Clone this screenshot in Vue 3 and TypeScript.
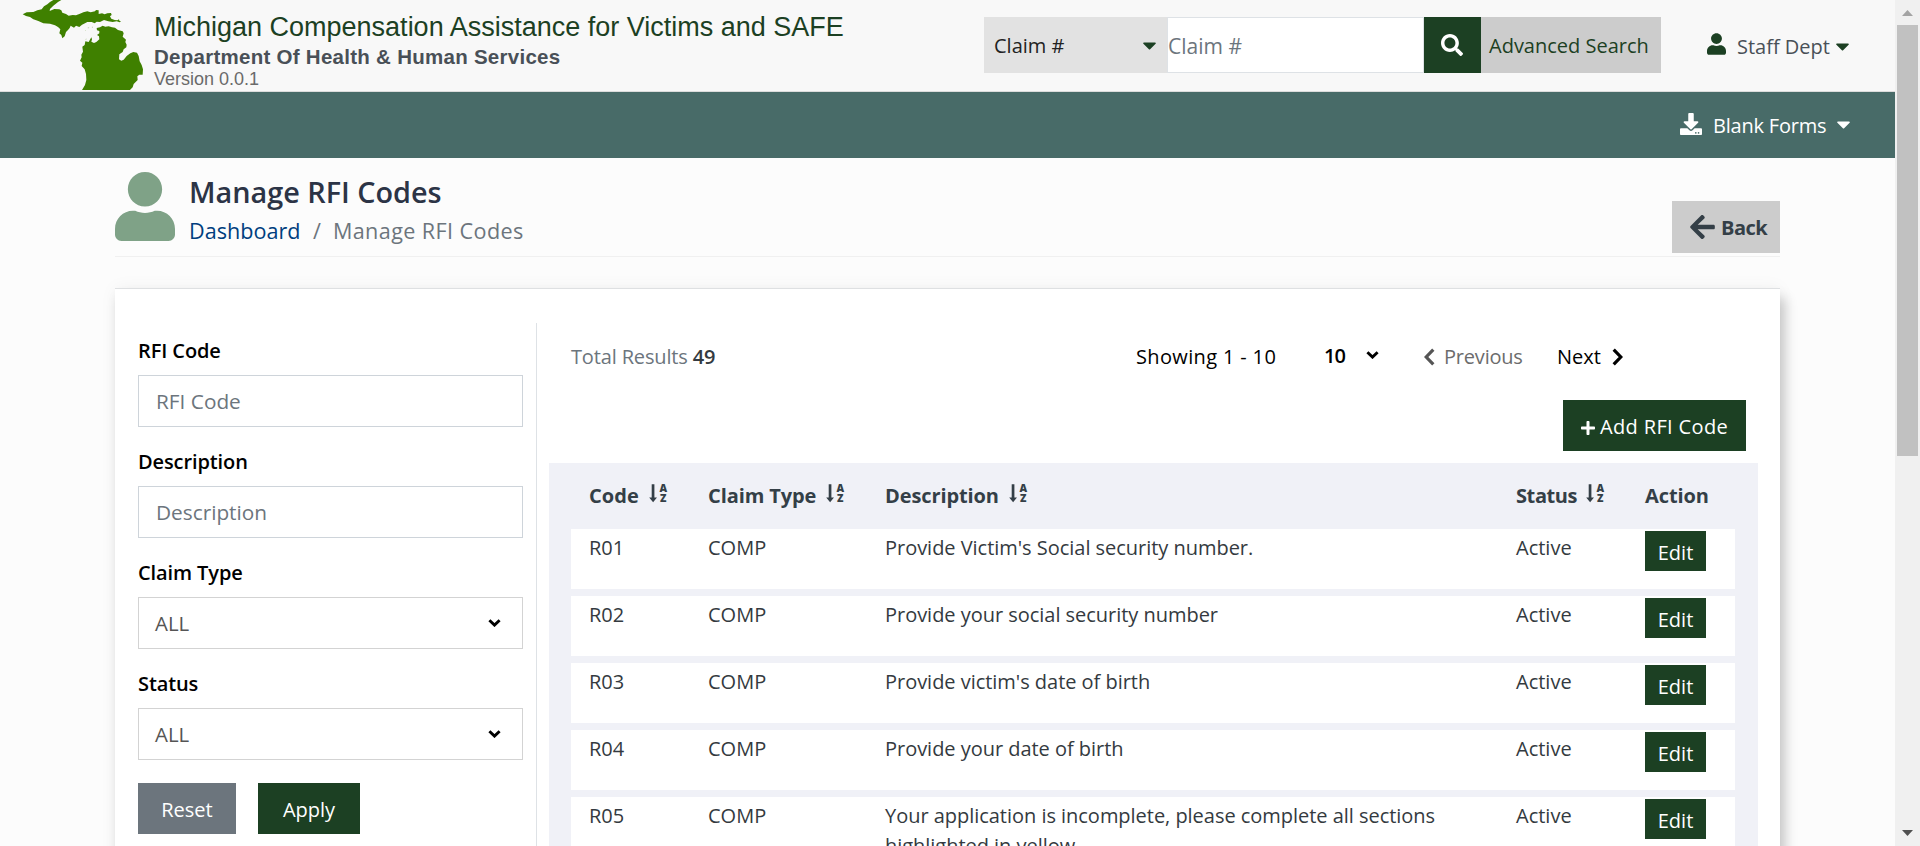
<script setup lang="ts">
interface RfiCode {
  code: string
  claimType: string
  description: string
  status: string
}

const rows: RfiCode[] = [
  { code: 'R01', claimType: 'COMP', description: "Provide Victim's Social security number.", status: 'Active' },
  { code: 'R02', claimType: 'COMP', description: 'Provide your social security number', status: 'Active' },
  { code: 'R03', claimType: 'COMP', description: "Provide victim's date of birth", status: 'Active' },
  { code: 'R04', claimType: 'COMP', description: 'Provide your date of birth', status: 'Active' },
  {
    code: 'R05',
    claimType: 'COMP',
    description: 'Your application is incomplete, please complete all sections highlighted in yellow.',
    status: 'Active',
  },
]

const columns: { label: string; sortable: boolean }[] = [
  { label: 'Code', sortable: true },
  { label: 'Claim Type', sortable: true },
  { label: 'Description', sortable: true },
  { label: 'Status', sortable: true },
  { label: 'Action', sortable: false },
]

const caret =
  'M31.3 192h257.3c17.8 0 26.7 21.5 14.1 34.1L174.1 354.8c-7.8 7.8-20.5 7.8-28.3 0L17.2 226.1C4.6 213.5 13.5 192 31.3 192z'
const userPath =
  'M224 256c70.7 0 128-57.3 128-128S294.7 0 224 0 96 57.3 96 128s57.3 128 128 128zm89.6 32h-16.7c-22.2 10.2-46.9 16-72.9 16s-50.6-5.8-72.9-16h-16.7C60.2 288 0 348.2 0 422.4V464c0 26.5 21.5 48 48 48h352c26.5 0 48-21.5 48-48v-41.6c0-74.2-60.2-134.4-134.4-134.4z'
</script>

<template>
  <div class="window">
    <div class="page">
      <header class="top">
        <svg class="logo" viewBox="66 0 363 270" aria-hidden="true">
          <path d="M68 43L80 37 100 36 112 31 125 28 132 19 142 13 150 6 160 0H184L174 6 160 17 150 27 149 33 156 30 163 27 178 28 184 31 187 38 198 42 206 47 218 45 228 46 238 42 250 37 262 34 272 37 285 34 288 30 296 31 296 42 306 40 314 43 322 40 333 39 335 45 330 49 334 56 344 60 352 61 357 58 358 62 363 64 359 67 350 64 338 66 325 64 312 60 300 66 290 65 284 70 275 66 262 66 255 70 246 74 238 81 228 77 222 83 212 77 209 84 204 90 198 96 194 109 187 115 184 105 178 100 181 88 174 81 165 76 150 71 130 70 115 63 100 58 90 51 78 48Z" />
          <path d="M290 84L300 82 308 77 316 80 326 79 336 82 345 83 354 90 368 94 371 100 368 110 378 119 376 126 380 134 379 142 371 148 368 156 358 163 357 178 364 182 371 179 380 168 391 160 400 156 411 158 416 168 419 184 425 195 429 208 428 224 418 224 412 229 413 240 401 252 398 262 390 270H246L255 255 259 240 258 222 254 208 245 198 247 188 240 182 245 172 244 164 249 155 247 140 254 135 256 124 266 126 274 112 276 118 274 125 282 129 289 126 298 118 297 109 291 105 298 100 298 93 291 91Z" />
          <path class="isles" d="M262 84l6-2-2 3zM275 81l4-1-1 3zM255 91l3-1-1 2zM256 117l4-1-2 3z" />
        </svg>
        <div class="brand">
          <div class="brand-title">Michigan Compensation Assistance for Victims and SAFE</div>
          <div class="brand-dept">Department Of Health &amp; Human Services</div>
          <div class="brand-version">Version 0.0.1</div>
        </div>
        <div class="search">
          <div class="search-type">
            <span>Claim #</span>
            <svg class="caret" viewBox="8 192 304 169"><path :d="caret" /></svg>
          </div>
          <input class="search-input" type="text" placeholder="Claim #" />
          <button class="search-btn" aria-label="Search">
            <svg viewBox="0 0 512 512"><path d="M505 442.7L405.3 343c-4.5-4.5-10.6-7-17-7H372c27.6-35.3 44-79.7 44-128C416 93.1 322.9 0 208 0S0 93.1 0 208s93.1 208 208 208c48.3 0 92.7-16.4 128-44v16.3c0 6.4 2.5 12.5 7 17l99.7 99.7c9.4 9.4 24.6 9.4 33.9 0l28.3-28.3c9.4-9.4 9.4-24.6.1-34zM208 336c-70.7 0-128-57.2-128-128 0-70.7 57.2-128 128-128 70.7 0 128 57.2 128 128 0 70.7-57.2 128-128 128z" /></svg>
          </button>
          <a class="advanced">Advanced Search</a>
        </div>
        <div class="account">
          <svg class="account-icon" viewBox="0 0 448 512"><path :d="userPath" /></svg>
          <span class="account-name">Staff Dept</span>
          <svg class="caret" viewBox="8 192 304 169"><path :d="caret" /></svg>
        </div>
      </header>

      <nav class="nav">
        <svg class="nav-icon" viewBox="0 0 512 512"><path d="M216 0h80c13.3 0 24 10.7 24 24v168h87.7c17.8 0 26.7 21.5 14.1 34.1L269.7 378.3c-7.5 7.5-19.8 7.5-27.3 0L90.1 226.1c-12.6-12.6-3.7-34.1 14.1-34.1H192V24c0-13.3 10.7-24 24-24zm296 376v112c0 13.3-10.7 24-24 24H24c-13.3 0-24-10.7-24-24V376c0-13.3 10.7-24 24-24h146.7l49 49c20.1 20.1 52.5 20.1 72.6 0l49-49H488c13.3 0 24 10.7 24 24zm-124 88c0-11-9-20-20-20s-20 9-20 20 9 20 20 20 20-9 20-20zm64 0c0-11-9-20-20-20s-20 9-20 20 9 20 20 20 20-9 20-20z" /></svg>
        <span class="nav-label">Blank Forms</span>
        <svg class="caret" viewBox="8 192 304 169"><path :d="caret" /></svg>
      </nav>

      <main class="content">
        <section class="heading">
          <svg class="heading-icon" viewBox="0 0 448 512" preserveAspectRatio="none"><path :d="userPath" /></svg>
          <div class="heading-text">
            <h1>Manage RFI Codes</h1>
            <div class="crumbs">
              <a>Dashboard</a><span class="slash">/</span><span class="current">Manage RFI Codes</span>
            </div>
          </div>
          <button class="back">
            <svg viewBox="0 38 448 436"><path d="M257.5 445.1l-22.2 22.2c-9.4 9.4-24.6 9.4-33.9 0L7 273c-9.4-9.4-9.4-24.6 0-33.9L201.4 44.7c9.4-9.4 24.6-9.4 33.9 0l22.2 22.2c9.5 9.5 9.3 25-.4 34.3L136.6 216H424c13.3 0 24 10.7 24 24v32c0 13.3-10.7 24-24 24H136.6l120.5 114.8c9.8 9.3 10 24.8.4 34.3z" /></svg>
            <span>Back</span>
          </button>
        </section>

        <section class="card">
          <aside class="filters">
            <label>RFI Code</label>
            <input class="field" type="text" placeholder="RFI Code" />
            <label>Description</label>
            <input class="field" type="text" placeholder="Description" />
            <label>Claim Type</label>
            <div class="field select">
              <span>ALL</span>
              <svg class="chev" viewBox="0 0 13 8"><path d="M1.4 1.2L6.5 6.1 11.6 1.2" /></svg>
            </div>
            <label>Status</label>
            <div class="field select">
              <span>ALL</span>
              <svg class="chev" viewBox="0 0 13 8"><path d="M1.4 1.2L6.5 6.1 11.6 1.2" /></svg>
            </div>
            <div class="filter-actions">
              <button class="btn reset">Reset</button>
              <button class="btn apply">Apply</button>
            </div>
          </aside>

          <div class="results">
            <div class="pager">
              <div class="total">Total Results <b>49</b></div>
              <div class="showing">Showing 1 - 10</div>
              <div class="size">
                <span>10</span>
                <svg class="chev" viewBox="0 0 13 8"><path d="M1.4 1.2L6.5 6.1 11.6 1.2" /></svg>
              </div>
              <div class="prev">
                <svg class="arrow" viewBox="0 0 11 18"><path d="M9.3 1.6L2.2 9l7.1 7.4" /></svg>
                <span>Previous</span>
              </div>
              <div class="next">
                <span>Next</span>
                <svg class="arrow" viewBox="0 0 11 18"><path d="M1.7 1.6L8.8 9l-7.1 7.4" /></svg>
              </div>
            </div>
            <div class="toolbar">
              <button class="btn add">
                <svg viewBox="0 32 448 448"><path d="M416 208H272V64c0-17.67-14.33-32-32-32h-32c-17.67 0-32 14.33-32 32v144H32c-17.67 0-32 14.33-32 32v32c0 17.67 14.33 32 32 32h144v144c0 17.67 14.33 32 32 32h32c17.67 0 32-14.33 32-32V304h144c17.67 0 32-14.33 32-32v-32c0-17.67-14.33-32-32-32z" /></svg>
                <span>Add RFI Code</span>
              </button>
            </div>
            <div class="table">
              <div class="row head">
                <div v-for="col in columns" :key="col.label" class="cell">
                  <span>{{ col.label }}</span>
                  <svg v-if="col.sortable" class="sort" viewBox="0 0 19 19">
                    <path d="M2.7 0.3h2.7v13.2H8L4.1 18.3 0.2 13.5h2.5z" />
                    <text x="10.6" y="7.9">A</text>
                    <text x="11" y="18.4">Z</text>
                  </svg>
                </div>
              </div>
              <div v-for="row in rows" :key="row.code" class="row body">
                <div class="cell">{{ row.code }}</div>
                <div class="cell">{{ row.claimType }}</div>
                <div class="cell desc">{{ row.description }}</div>
                <div class="cell">{{ row.status }}</div>
                <div class="action"><button class="edit">Edit</button></div>
              </div>
            </div>
          </div>
        </section>
      </main>
    </div>

    <div class="scrollbar" aria-hidden="true">
      <div class="sb-btn up"><svg viewBox="0 0 11 6"><path d="M0 6L5.5 0 11 6z" /></svg></div>
      <div class="thumb"></div>
      <div class="sb-btn down"><svg viewBox="0 0 11 6"><path d="M0 0L5.5 6 11 0z" /></svg></div>
    </div>
  </div>
</template>

<style>
body {
  overflow: hidden;
}
</style>

<style scoped>
* {
  box-sizing: border-box;
}
.window {
  display: flex;
  width: 1920px;
  height: 846px;
  overflow: hidden;
  font-family: 'Open Sans', 'Noto Sans', sans-serif;
  font-size: 20px;
  line-height: 30px;
  color: #343a40;
}
button,
input {
  font: inherit;
  border: 0;
  border-radius: 0;
  padding: 0;
  margin: 0;
}
svg {
  display: block;
  flex: none;
  fill: currentColor;
}
.page {
  width: 1895px;
  height: 846px;
  overflow: hidden;
  background: #fcfcfc;
}
.top {
  display: flex;
  height: 92px;
  background: #f8f8f8;
  border-bottom: 1px solid #dcdcdc;
}
.logo {
  width: 121px;
  height: 90px;
  margin-left: 22px;
  fill: #3f8000;
}
.isles {
  opacity: 0.5;
}
.brand {
  width: 830px;
  margin-left: 11px;
  padding-top: 10px;
  font-family: 'Liberation Sans', Arial, sans-serif;
  white-space: nowrap;
}
.brand-title {
  font-size: 27px;
  line-height: 34px;
  color: #1c4023;
}
.brand-dept {
  font-size: 20.5px;
  font-weight: 700;
  line-height: 25px;
  letter-spacing: 0.27px;
  color: #495057;
}
.brand-version {
  font-size: 18px;
  line-height: 21px;
  color: #6a6a6a;
}
.search {
  display: flex;
  height: 56px;
  margin-top: 17px;
  white-space: nowrap;
}
.search-type {
  display: flex;
  align-items: center;
  justify-content: space-between;
  width: 183px;
  padding: 2px 11px 0 10px;
  background: #e2e2e2;
  color: #222;
}
.caret {
  width: 13px;
  height: 8px;
}
.search-type .caret,
.account .caret {
  color: #1c4023;
}
.search-input {
  width: 257px;
  padding: 1px 0 0;
  border: 1px solid #dee2e6;
  background: #fff;
  outline: 0;
  font-size: 21px;
}
input::placeholder {
  color: #6c757d;
  opacity: 1;
}
.search-btn {
  display: flex;
  align-items: center;
  justify-content: center;
  width: 57px;
  padding-right: 2px;
  background: #1c4023;
  color: #fff;
}
.search-btn svg {
  width: 22px;
  height: 22px;
}
.advanced {
  width: 180px;
  padding-left: 8px;
  line-height: 58px;
  background: #ccc;
  color: #1c4023;
}
.account {
  display: flex;
  align-items: center;
  margin-left: 46px;
  white-space: nowrap;
}
.account-icon {
  width: 19px;
  height: 22px;
  margin-bottom: 4px;
  color: #1c4023;
}
.account-name {
  width: 110px;
  padding: 3px 0 0 11px;
  color: #495057;
}
.account .caret {
  margin-top: 2px;
}
.nav {
  display: flex;
  align-items: center;
  justify-content: flex-end;
  height: 66px;
  padding-right: 45px;
  background: #486b68;
  color: #fff;
}
.nav-icon {
  width: 22px;
  height: 22px;
  margin: 0 11px 2px 0;
}
.nav-label {
  width: 124px;
  padding-top: 2px;
  letter-spacing: -0.2px;
  white-space: nowrap;
}
.content {
  width: 1665px;
  margin-left: 115px;
}
.heading {
  display: flex;
  height: 99px;
  border-bottom: 1px solid #f0f0f0;
}
.heading-icon {
  width: 60px;
  height: 69px;
  margin-top: 14px;
  color: #7fa287;
}
.heading-text {
  flex: 1;
  padding: 16px 0 0 14px;
}
h1 {
  margin: 0;
  font-size: 28.8px;
  font-weight: 600;
  line-height: 36px;
  color: #2c3446;
}
.crumbs {
  display: flex;
  margin-top: 6px;
  font-size: 21.6px;
  line-height: 30px;
}
.crumbs a {
  color: #003e7e;
}
.slash,
.current {
  color: #6c757d;
}
.slash {
  padding: 0 12px 0 12.5px;
}
.current {
  letter-spacing: 0.4px;
}
.back {
  display: flex;
  align-items: center;
  width: 108px;
  height: 52px;
  margin-top: 43px;
  padding: 1px 0 0 18px;
  gap: 6px;
  background: #ccc;
  color: #343f47;
  font-weight: 700;
  letter-spacing: -0.5px;
}
.back svg {
  width: 25px;
  height: 24px;
  margin-bottom: 1px;
}
.card {
  display: flex;
  height: 700px;
  margin-top: 31px;
  padding-top: 34px;
  border-top: 1px solid #dee0e2;
  background: #fff;
  box-shadow: 5px 10px 12px rgba(0, 0, 0, 0.2), 0 0 16px rgba(0, 0, 0, 0.05);
}
.filters {
  width: 422px;
  padding: 12px 13px 0 23px;
  border-right: 1px solid #dee2e6;
}
.filters label {
  display: block;
  height: 40px;
  padding-top: 1px;
  font-weight: 600;
  line-height: 30px;
  letter-spacing: -0.1px;
  color: #000;
}
.field {
  display: block;
  width: 385px;
  height: 52px;
  margin-bottom: 19px;
  padding: 0 17px;
  border: 1px solid #ced4da;
  background: #fff;
  outline: 0;
  font-size: 20.8px;
}
.select {
  display: flex;
  align-items: center;
  justify-content: space-between;
  padding: 0 21px 0 16px;
  border-color: #d3d3d3;
  color: #555;
  font-size: 20.4px;
}
.chev {
  width: 13px;
  height: 8px;
  fill: none;
  stroke: #000;
  stroke-width: 2.9;
}
.filter-actions {
  display: flex;
  gap: 22px;
  margin-top: 23px;
}
.btn {
  height: 51px;
  padding-top: 2px;
  color: #fff;
  background: #1c4023;
}
.reset {
  width: 98px;
  background: #6c757d;
}
.apply {
  width: 102px;
}
.results {
  width: 1209px;
  margin-left: 12px;
}
.pager {
  display: flex;
  height: 77px;
  padding: 19px 0 0 22px;
  white-space: nowrap;
  color: #000;
}
.total {
  width: 565px;
  letter-spacing: -0.15px;
  color: #6c757d;
}
.total b {
  font-weight: 600;
  color: #343a40;
}
.showing {
  width: 188px;
  letter-spacing: 0.35px;
}
.size {
  display: flex;
  width: 100px;
  margin-top: -1px;
  font-weight: 600;
  gap: 17px;
  letter-spacing: -1px;
}
.size span {
  width: 25px;
}
.size .chev {
  margin-top: 10px;
}
.prev {
  display: flex;
  width: 133px;
  gap: 9px;
  letter-spacing: -0.2px;
  color: #6c6c6c;
}
.next {
  display: flex;
  gap: 11px;
}
.arrow {
  width: 11px;
  height: 18px;
  margin-top: 6px;
  fill: none;
  stroke: #000;
  stroke-width: 3.2;
}
.prev .arrow {
  stroke: #555;
}
.toolbar {
  display: flex;
  justify-content: flex-end;
  height: 63px;
  padding-right: 12px;
}
.add {
  display: flex;
  align-items: center;
  width: 183px;
  padding-left: 18px;
  gap: 5px;
  letter-spacing: 0.35px;
  white-space: nowrap;
}
.add svg {
  width: 14px;
  height: 14px;
  margin-top: 3px;
}
.table {
  padding: 0 23px 0 22px;
  background: #f0f1f7;
}
.row {
  display: grid;
  grid-template-columns: 119px 177px 631px 129px 108px;
  padding-left: 18px;
}
.head {
  height: 66px;
  padding-top: 18px;
  font-weight: 700;
  letter-spacing: -0.1px;
  color: #343f47;
}
.head .cell {
  display: flex;
  gap: 10px;
  white-space: nowrap;
}
.head .cell:nth-child(1) {
  letter-spacing: 0.1px;
}
.head .cell:nth-child(4) {
  gap: 9px;
  letter-spacing: -0.4px;
}
.sort {
  width: 19px;
  height: 19px;
  margin-top: 3px;
  overflow: visible;
}
.sort text {
  font-size: 10.5px;
  font-weight: 800;
  letter-spacing: 0;
}
.body {
  min-height: 60px;
  margin-bottom: 7px;
  background: #fff;
}
.body .cell {
  padding-top: 4px;
}
.desc {
  width: 590px;
  letter-spacing: -0.03px;
}
.edit {
  display: block;
  width: 61px;
  height: 40px;
  margin-top: 2px;
  padding-top: 3px;
  background: #1c4023;
  color: #fff;
}
.scrollbar {
  display: flex;
  flex-direction: column;
  width: 25px;
  height: 846px;
  padding: 0 2px;
  background: #f0f0f0;
}
.sb-btn {
  display: flex;
  justify-content: center;
  width: 21px;
  height: 25px;
}
.sb-btn svg {
  width: 11px;
  height: 6px;
  margin-top: 10px;
}
.up {
  color: #a3a3a3;
}
.down {
  margin-top: auto;
  color: #505050;
}
.down svg {
  margin-top: 9px;
}
.thumb {
  height: 431px;
  background: #c1c1c1;
}
</style>
